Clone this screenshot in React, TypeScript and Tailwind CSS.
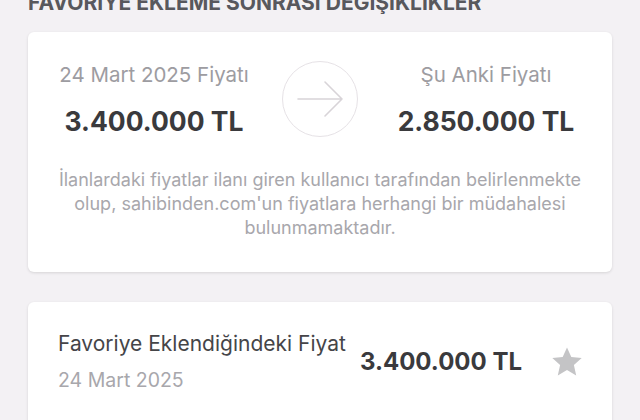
export default function App() {
  return (
    <div
      className="h-[420px] w-[640px] overflow-hidden bg-[#f3f1f4] px-[28px]"
      style={{ fontFamily: "Inter, Roboto, 'Noto Sans', sans-serif" }}
    >
      <h1 className="-mt-[9px] mb-[17px] text-[21px] font-bold uppercase leading-[24px] text-[#58585d]">
        FAVORİYE EKLEME SONRASI DEGİŞİKLİKLER
      </h1>

      <div className="h-[240px] rounded-[6px] bg-white pt-[29px] shadow-[0_1px_3px_rgba(0,0,0,0.12)]">
        <div className="flex items-center justify-between px-[16px]">
          <div className="flex w-[220px] flex-col items-center">
            <p className="whitespace-nowrap text-[20.5px] leading-[26px] text-[#9d9ca1]">24 Mart 2025 Fiyatı</p>
            <p className="mt-[17px] whitespace-nowrap text-[26.5px] font-bold leading-[32px] text-[#3a3a3d]">3.400.000 TL</p>
          </div>
          <div className="flex h-[76px] w-[76px] items-center justify-center rounded-full border border-[#e6e2e6]">
            <svg width="48" height="40" viewBox="0 0 48 40" fill="none" stroke="#d8d4d8" strokeWidth="1.6" strokeLinecap="round" strokeLinejoin="round">
              <path d="M2 20h44M29 3l17 17-17 17" />
            </svg>
          </div>
          <div className="flex w-[220px] flex-col items-center">
            <p className="whitespace-nowrap text-[20.5px] leading-[26px] text-[#9d9ca1]">Şu Anki Fiyatı</p>
            <p className="mt-[17px] whitespace-nowrap text-[26.5px] font-bold leading-[32px] text-[#3a3a3d]">2.850.000 TL</p>
          </div>
        </div>
        <p className="mx-auto mt-[31px] w-[545px] text-center text-[18px] leading-[24px] text-[#a8a7ac]">
          İlanlardaki fiyatlar ilanı giren kullanıcı tarafından belirlenmekte olup, sahibinden.com'un fiyatlara herhangi bir müdahalesi bulunmamaktadır.
        </p>
      </div>

      <div className="mt-[30px] flex h-[140px] items-start rounded-[6px] bg-white pl-[30px] pr-[29px] pt-[29px] shadow-[0_1px_3px_rgba(0,0,0,0.12)]">
        <div className="flex flex-col">
          <p className="text-[21px] leading-[26px] text-[#454548]">Favoriye Eklendiğindeki Fiyat</p>
          <p className="mt-[10px] text-[19.5px] leading-[26px] text-[#a8a7ac]">24 Mart 2025</p>
        </div>
        <p className="ml-auto mt-[15px] text-[24px] font-bold leading-[32px] text-[#3a3a3d]">3.400.000 TL</p>
        <svg className="ml-[29px] mt-[15px]" width="32" height="32" viewBox="0 0 32 32" fill="#c4c4c6">
          <path d="M16 1.5l4.3 9.6 10.4 1-7.8 7 2.3 10.3L16 24.1l-9.2 5.3 2.3-10.3-7.8-7 10.4-1z" />
        </svg>
      </div>
    </div>
  );
}
